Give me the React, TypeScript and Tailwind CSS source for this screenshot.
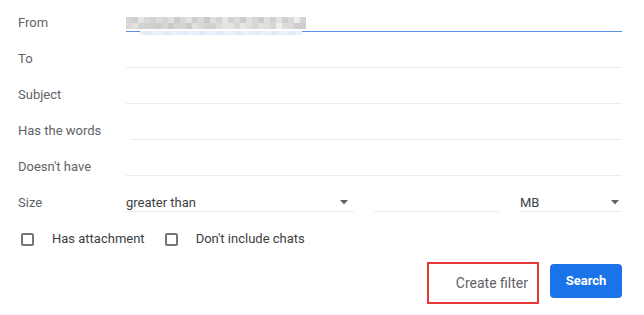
import React from "react";

const font = { fontFamily: "Roboto, 'Liberation Sans', Arial, sans-serif" };

const greys = [
  "#d6d6d6", "#cfcfcf", "#e4e4e4", "#d9d9d9", "#d2d2d2", "#dcdcdc", "#d4d4d4", "#e0e0e0",
  "#cccccc", "#d8d8d8", "#e2e2e2", "#d0d0d0", "#dadada", "#c9c9c9", "#dedede", "#d5d5d5",
  "#e6e6e6", "#d3d3d3", "#dbdbdb", "#cdcdcd", "#e1e1e1", "#d7d7d7", "#cbcbcb", "#dfdfdf",
  "#d1d1d1", "#e3e3e3", "#cecece", "#d9d9d9", "#eeeeee", "#d4d4d4",
];

function Mosaic() {
  const top = greys;
  const bottom = greys.map((_, i) => (i % 3 === 0 ? "#e8eefb" : i % 3 === 1 ? "#e1e9fa" : "#eaf0fc"));
  return (
    <div className="absolute left-0 top-[13px] w-[180px] pointer-events-none">
      <div className="flex">
        {top.map((c, i) => (
          <div key={"a" + i} className="w-[6px] h-[6px]" style={{ background: c }} />
        ))}
      </div>
      <div className="flex">
        {top.map((_, i) => (
          <div key={"b" + i} className="w-[6px] h-[6px]" style={{ background: top[(i * 7 + 3) % top.length] }} />
        ))}
      </div>
      <div className="flex pl-[14px] mt-[2px]">
        {bottom.slice(0, 27).map((c, i) => (
          <div key={"c" + i} className="w-[6px] h-[4px]" style={{ background: c }} />
        ))}
      </div>
    </div>
  );
}

function Row({ label, children }: { label: string; children: React.ReactNode }) {
  return (
    <div className="flex items-start h-9">
      <div className="w-[108px] shrink-0 pt-[1px] leading-[36px] text-[13px] text-[#5f6368]">{label}</div>
      {children}
    </div>
  );
}

function Arrow() {
  return (
    <svg width="8" height="5" viewBox="0 0 8 5" className="shrink-0">
      <path d="M0 0 L8 0 L4 4.5 Z" fill="#5f6368" />
    </svg>
  );
}

function Checkbox({ label }: { label: string }) {
  return (
    <div className="flex items-center">
      <div className="w-[13px] h-[13px] border-2 border-[#757575] rounded-[2px]" />
      <span className="ml-[18px] text-[13px] text-[#3c4043]">{label}</span>
    </div>
  );
}

export default function App() {
  return (
    <div className="w-[644px] h-[315px] bg-white pt-[4px] pl-[18px] pr-[22px]" style={font}>
      <Row label="From">
        <div className="relative flex-1 h-7 border-b border-[#5b8ee6]">
          <Mosaic />
        </div>
      </Row>
      <Row label="To">
        <div className="flex-1 h-7 border-b border-[#ececec]" />
      </Row>
      <Row label="Subject">
        <div className="flex-1 h-7 border-b border-[#ececec]" />
      </Row>
      <Row label="Has the words">
        <div className="flex-1 ml-[4px] h-7 border-b border-[#ececec]" />
      </Row>
      <Row label="Doesn't have">
        <div className="flex-1 h-7 border-b border-[#ececec]" />
      </Row>
      <Row label="Size">
        <div className="flex flex-1">
          <div className="w-[228px] h-7 border-b border-[#ececec] flex items-center justify-between pr-[6px] pt-[10px]">
            <span className="text-[13px] text-[#3c4043]">greater than</span>
            <Arrow />
          </div>
          <div className="w-[125px] ml-[20px] h-7 border-b border-[#ececec]" />
          <div className="w-[102px] ml-[21px] h-7 border-b border-[#ececec] flex items-center justify-between pr-[3px] pt-[10px]">
            <span className="text-[13px] text-[#3c4043]">MB</span>
            <Arrow />
          </div>
        </div>
      </Row>
      <div className="flex items-center h-9 pt-[2px] pl-[3px] gap-[20px]">
        <Checkbox label="Has attachment" />
        <Checkbox label="Don't include chats" />
      </div>
      <div className="flex justify-end items-start mt-[6px] gap-[11px]">
        <div className="w-[112px] h-[42px] border-2 border-[#e53935] flex items-center justify-end pr-[9px]">
          <span className="text-[14px] text-[#5f6368]">Create filter</span>
        </div>
        <button className="mt-[2px] w-[72px] h-[34px] rounded-[4px] bg-[#1a73e8] text-white text-[13px] font-bold">
          Search
        </button>
      </div>
    </div>
  );
}
